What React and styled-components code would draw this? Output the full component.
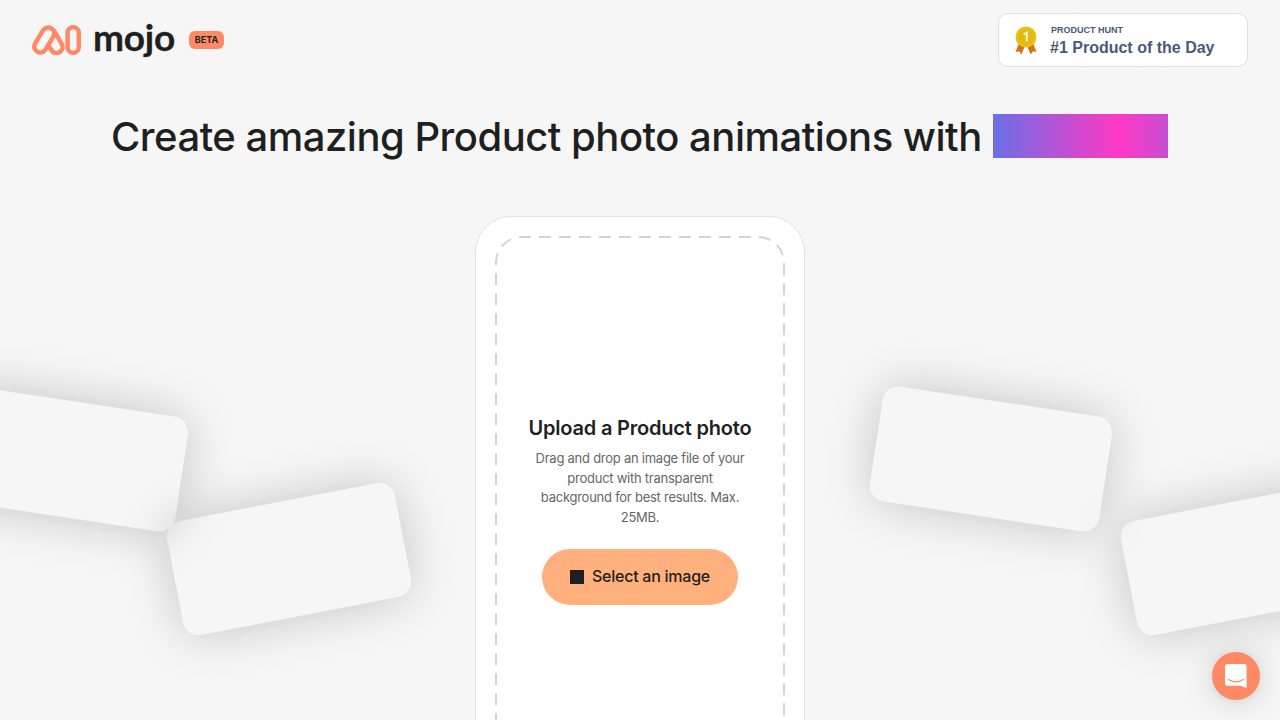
import React from 'react';
import styled, { createGlobalStyle } from 'styled-components';

const App = () => {
    return (
        <Page>
            <GlobalStyle />
            <Header>
                <Brand>
                    <LogoMark />
                    <Wordmark>mojo</Wordmark>
                    <Beta>BETA</Beta>
                </Brand>
                <HuntBadge>
                    <Medal />
                    <div>
                        <HuntLabel>PRODUCT HUNT</HuntLabel>
                        <HuntTitle>#1 Product of the Day</HuntTitle>
                    </div>
                </HuntBadge>
            </Header>

            <Headline>
                <span>Create amazing Product photo animations with</span>
                <Highlight />
            </Headline>

            <FloatingCard x={67} y={459} angle={8.6} />
            <FloatingCard x={289} y={559} angle={-10.9} />
            <FloatingCard x={991} y={459} angle={8.6} />
            <FloatingCard x={1243} y={559} angle={-10.9} />

            <Panel>
                <DropZone>
                    <DashedFrame />
                    <UploadTitle>Upload a Product photo</UploadTitle>
                    <UploadText>
                        Drag and drop an image file of your<br />
                        product with transparent<br />
                        background for best results. Max.<br />
                        25MB.
                    </UploadText>
                    <SelectButton>
                        <ButtonIcon />
                        <ButtonLabel>Select an image</ButtonLabel>
                    </SelectButton>
                </DropZone>
            </Panel>

            <ChatButton aria-label="Open chat">
                <ChatIcon />
            </ChatButton>
        </Page>
    )
}

export default App


const LogoMark = () => (
    <svg width="50" height="30" viewBox="0 0 50 30" fill="none" stroke="#ff8964" strokeWidth="4.5" strokeLinejoin="round">
        <path d="M2.9 18.9 L11.4 4.9 A6 6 0 0 1 21.6 11.1 L13.1 25.1 A6 6 0 0 1 2.9 18.9 Z" />
        <path d="M21.7 5 L29.7 19 A6 6 0 0 1 19.3 25 L16 19.5" />
        <rect x="35.6" y="2.2" width="11.2" height="25.6" rx="5.6" />
    </svg>
)

const Medal = () => (
    <svg width="22" height="29" viewBox="0 0 22 29">
        <path d="M4 17 L0.5 26 L4 25.3 L6.3 28.5 L10 20 Z" fill="#d8701c" />
        <path d="M18 17 L21.5 26 L18 25.3 L15.7 28.5 L12 20 Z" fill="#d8701c" />
        <circle cx="11" cy="11" r="10.5" fill="#e6c512" />
        <circle cx="11" cy="11" r="8" fill="#e3b913" />
        <path d="M8.6 8.5 L11.8 6.7 V15.2" fill="none" stroke="#fff6c8" strokeWidth="2" />
    </svg>
)

const DashedFrame = () => (
    <Frame width="290" height="546" fill="none">
        <rect x="1" y="1" width="288" height="544.5" rx="25.6" stroke="#d4d4d4" strokeWidth="2" strokeDasharray="12 8" strokeDashoffset="2.6" />
    </Frame>
)

const ChatIcon = () => (
    <svg width="22" height="24" viewBox="0 0 22 24">
        <path d="M2.6 0 H19.4 C20.8 0 21.6 1 21.6 2.4 V24 L15 21.7 H2.6 C1 21.7 0 20.8 0 19.2 V2.4 C0 1 1 0 2.6 0 Z" fill="#fff" />
        <path d="M3.6 15.4 C8 18.4 13.8 18.4 18.2 15.4" fill="none" stroke="#ff8964" strokeWidth="1.2" strokeLinecap="round" />
    </svg>
)


const GlobalStyle = createGlobalStyle`
    * {
        box-sizing: border-box;
    }

    body {
        margin: 0;
        background: #f6f6f6;
        color: #1f1f1f;
        font-family: Inter, "Liberation Sans", sans-serif;
    }
`

const Page = styled.div`
    position: relative;
    height: 100vh;
    overflow: hidden;
`

const Header = styled.header`
    display: flex;
    justify-content: space-between;
    align-items: center;
    height: 80px;
    padding: 0 32px;
`

const Brand = styled.div`
    display: flex;
    align-items: center;
`

const Wordmark = styled.span`
    margin: -6px 0 0 11px;
    width: 83px;
    font-family: Lato, sans-serif;
    font-size: 37px;
    font-weight: 700;
    letter-spacing: -.2px;
    line-height: 48px;
    -webkit-text-stroke: .3px #1f1f1f;
`

const Beta = styled.span`
    width: 35px;
    height: 18px;
    margin-left: 13px;
    border-radius: 6px;
    background: #ff8964;
    font-size: 9px;
    font-weight: 700;
    letter-spacing: .1px;
    line-height: 18px;
    text-align: center;
`

const HuntBadge = styled.div`
    display: flex;
    align-items: center;
    width: 250px;
    height: 54px;
    padding-left: 16px;
    gap: 13px;
    border: 1px solid #e0e0e0;
    border-radius: 10px;
    background: #fff;
    color: #4b587c;
    font-family: "Liberation Sans", Arial, sans-serif;
    font-weight: 700;
`

const HuntLabel = styled.div`
    padding-left: 1px;
    font-size: 9px;
    line-height: 14px;
`

const HuntTitle = styled.div`
    font-size: 16px;
    line-height: 21px;
`

const Headline = styled.h1`
    display: flex;
    align-items: center;
    margin: 34px 112px 0;
    height: 44px;
    font-size: 40px;
    font-weight: 500;
    letter-spacing: -.5px;
    line-height: 44px;
    white-space: nowrap;

    span {
        width: 881px;
        padding-top: 1px;
        text-indent: -1px;
    }
`

const Highlight = styled.div`
    width: 175px;
    height: 44px;
    background: linear-gradient(90deg, #6b6fe8 0%, #ff38c4 72%, #c64fd4 100%);
`

const FloatingCard = styled.div`
    position: absolute;
    left: ${({ x }) => x}px;
    top: ${({ y }) => y}px;
    width: 232px;
    height: 116px;
    border-radius: 16px;
    box-shadow: 0 0 50px rgba(0, 0, 0, .2);
    transform: translate(-50%, -50%) rotate(${({ angle }) => angle}deg);
`

const Panel = styled.main`
    width: 330px;
    height: 586px;
    margin: 58px auto 0;
    padding: 19px;
    border: 1px solid #e2e2e2;
    border-radius: 36px;
    background: #fff;
`

const DropZone = styled.div`
    position: relative;
    display: flex;
    flex-direction: column;
    align-items: center;
    height: 546px;
    padding-top: 180px;
    text-align: center;
`

const Frame = styled.svg`
    position: absolute;
    top: 0;
    left: 0;
`

const UploadTitle = styled.h2`
    margin: 0;
    font-size: 20px;
    font-weight: 600;
    letter-spacing: -.2px;
    line-height: 24px;
    white-space: nowrap;
`

const UploadText = styled.p`
    margin: 9px 0 0;
    color: #666;
    font-size: 13px;
    letter-spacing: -.25px;
    line-height: 19.6px;
    white-space: nowrap;
`

const SelectButton = styled.button`
    display: flex;
    align-items: center;
    justify-content: center;
    gap: 8px;
    width: 196px;
    height: 56px;
    margin-top: 22px;
    padding: 0;
    border: 0;
    border-radius: 28px;
    background: #ffb07c;
    color: #1f1f1f;
    font-family: inherit;
    font-size: 16px;
    font-weight: 500;
    letter-spacing: -.25px;
    white-space: nowrap;
`

const ButtonIcon = styled.span`
    width: 14px;
    height: 14px;
    background: #1f1f1f;
`

const ButtonLabel = styled.span`
    padding-bottom: 2px;
`

const ChatButton = styled.button`
    position: absolute;
    right: 20px;
    bottom: 20px;
    display: flex;
    align-items: center;
    justify-content: center;
    width: 48px;
    height: 48px;
    padding: 0;
    border: 0;
    border-radius: 50%;
    background: #ff8964;
    box-shadow: 0 1px 6px rgba(0, 0, 0, .06), 0 2px 32px rgba(0, 0, 0, .16);
`
